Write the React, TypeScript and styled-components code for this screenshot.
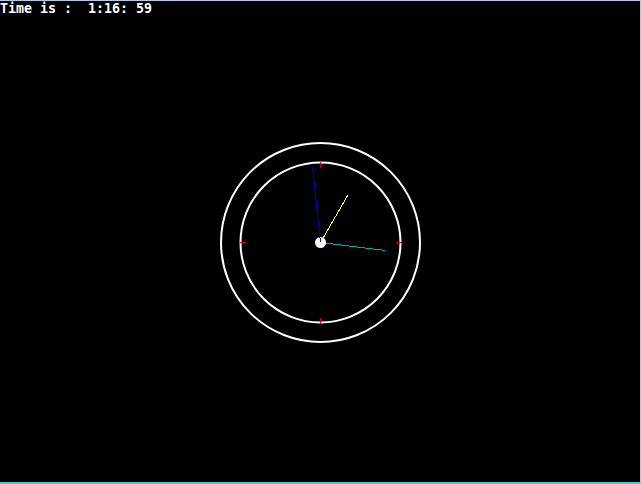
import React from "react";
import styled, { createGlobalStyle } from "styled-components";

const Global = createGlobalStyle`
  html, body { margin: 0; padding: 0; background: #000; }
  #root { width: 641px; height: 484px; }
`;

const Screen = styled.div`
  width: 641px;
  height: 484px;
  box-sizing: border-box;
  background: #000;
  border-top: 1px solid #b2cae6;
  border-right: 1px solid #b2cae6;
  border-bottom: 2px solid #46c4dc;
  display: flex;
  flex-direction: column;
  overflow: hidden;
`;

const Status = styled.div`
  height: 16px;
  line-height: 16px;
  padding-left: 0;
  color: #fff;
  font-family: "DejaVu Sans Mono", "Liberation Mono", monospace;
  font-weight: bold;
  font-size: 13.3px;
  white-space: pre;
  flex: none;
`;

const Canvas = styled.svg`
  display: block;
  flex: 1;
  width: 640px;
`;

const CX = 320.5;
const CY = 242.5 - 17;

type HandProps = { angle: number; length: number; color: string; start?: number };

const Hand = ({ angle, length, color, start = 0 }: HandProps) => {
  const r = (angle * Math.PI) / 180;
  const s = Math.sin(r);
  const c = Math.cos(r);
  return (
    <line
      x1={CX + start * s}
      y1={CY - start * c}
      x2={CX + length * s}
      y2={CY - length * c}
      stroke={color}
      strokeWidth={1}
      shapeRendering="crispEdges"
    />
  );
};

const Tick = ({ angle }: { angle: number }) => {
  const r = (angle * Math.PI) / 180;
  const s = Math.sin(r);
  const c = Math.cos(r);
  return (
    <line
      x1={CX + 75 * s}
      y1={CY - 75 * c}
      x2={CX + 81 * s}
      y2={CY - 81 * c}
      stroke="#d00000"
      strokeWidth={1.5}
      shapeRendering="crispEdges"
    />
  );
};

export default function App() {
  return (
    <>
      <Global />
      <Screen>
        <Status>{"Time is :  1:16: 59"}</Status>
        <Canvas viewBox="0 0 640 465" height={465}>
          <circle cx={CX} cy={CY} r={99.5} fill="none" stroke="#fff" strokeWidth={2} />
          <circle cx={CX} cy={CY} r={80} fill="none" stroke="#fff" strokeWidth={2} />
          {[0, 90, 180, 270].map((a) => (
            <Tick key={a} angle={a} />
          ))}
          <Hand angle={30} length={55} color="#ffff55" />
          <Hand angle={97} length={65} color="#00aaaa" />
          <circle cx={CX} cy={CY} r={5.5} fill="#fff" />
          <Hand angle={-6} length={75} color="#0000c8" />
        </Canvas>
      </Screen>
    </>
  );
}
